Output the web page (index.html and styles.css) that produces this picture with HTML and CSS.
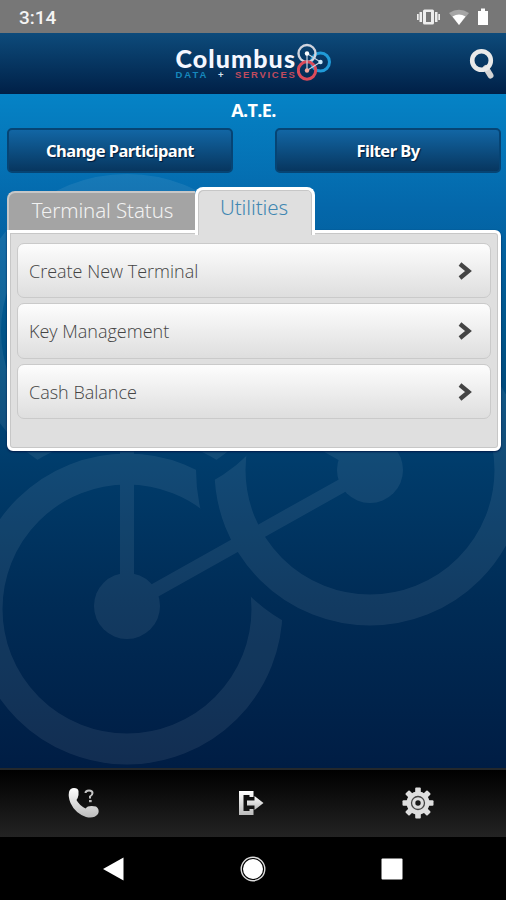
FILE: index.html
```html
<!DOCTYPE html>
<html lang="en">
<head>
<meta charset="utf-8">
<title>Columbus Data Services</title>
<link rel="stylesheet" href="styles.css">
</head>
<body>
<div class="status">
  <span class="clock">3:14</span>
  <svg class="status-icons" width="76" height="20" viewBox="0 0 76 20">
    <g fill="#eee"><rect x="6" y="2.500" width="11" height="15" rx="1.500"/><rect x="2.500" y="5" width="2.500" height="10"/><rect x="18" y="5" width="2.500" height="10"/><rect x="0" y="7" width="1.700" height="6"/><rect x="21.300" y="7" width="1.700" height="6"/></g>
    <rect x="9" y="5" width="5" height="10" fill="#777"/>
    <path d="M32 6Q42-.5 52 6L42 18Z" fill="#a5a5a5"/><path d="M35.500 9.500Q42 5.500 48.500 9.500L42 18Z" fill="#fff"/>
    <path d="M61 4h3V1.500h4V4h3v14H61Z" fill="#fff"/>
  </svg>
</div>
<header class="header">
  <div class="brand">
    <div class="wordmark"><div class="name">Columbus</div><div class="tag"><span class="data">DATA</span><span class="plus">+</span><span class="services">SERVICES</span></div></div>
    <svg class="logo" width="36" height="40" viewBox="0 0 36 40" fill="none">
      <circle cx="23.500" cy="20" r="9" stroke="#209bd8" stroke-width="3"/>
      <circle cx="10" cy="11.500" r="8.500" stroke="#d0d4de" stroke-width="2.400"/>
      <circle cx="10" cy="28.500" r="8.700" stroke="#db4b5a" stroke-width="3"/>
      <path d="M10 11.500V28.500L23.500 20Z" stroke="#c7d4e2" stroke-width="1.200"/>
      <circle cx="10" cy="11.500" r="2.200" fill="#fff"/><circle cx="10" cy="28.500" r="2.200" fill="#f6a69c"/><circle cx="23.500" cy="20" r="2.200" fill="#cdeafa"/>
    </svg>
  </div>
  <svg class="search" width="28" height="34" viewBox="0 0 28 34" fill="none"><path d="M17 20L21.500 27.500" stroke="#d4d4d4" stroke-width="6" stroke-linecap="round"/><circle cx="12.500" cy="12.500" r="9.300" stroke="#e9e9e9" stroke-width="4.600"/></svg>
</header>
<main class="main">
  <svg class="wheels" width="506" height="675" viewBox="0 94 506 675" fill="none">
    <defs>
      <mask id="cut1" maskUnits="userSpaceOnUse" x="-50" y="90" width="620" height="700"><rect x="-50" y="90" width="620" height="700" fill="#fff"/><circle cx="370" cy="470" r="174" fill="#000"/></mask>
      <mask id="cut2" maskUnits="userSpaceOnUse" x="-50" y="90" width="620" height="700"><rect x="-50" y="90" width="620" height="700" fill="#fff"/><circle cx="127" cy="331" r="173" fill="#000"/></mask>
      <mask id="cut3" maskUnits="userSpaceOnUse" x="-50" y="90" width="620" height="700"><rect x="-50" y="90" width="620" height="700" fill="#fff"/><circle cx="127" cy="609" r="174" fill="#000"/></mask>
    </defs>
    <g class="wheel-group" stroke="#fff" stroke-width="31">
      <circle cx="127" cy="609" r="140" mask="url(#cut1)"/>
      <circle cx="370" cy="470" r="140" mask="url(#cut2)"/>
      <circle cx="127" cy="331" r="141.500" mask="url(#cut3)"/>
      <path d="M127 331V606L370 470Z" stroke-width="14"/>
      <g fill="#fff" stroke="none"><circle cx="127" cy="606" r="33"/><circle cx="370" cy="470" r="33"/><circle cx="127" cy="331" r="33"/></g>
    </g>
  </svg>
  <h1 class="title">A.T.E.</h1>
  <div class="buttons"><button class="button">Change Participant</button><button class="button">Filter By</button></div>
  <nav class="tabs"><div class="tab">Terminal Status</div><div class="tab active"><span>Utilities</span></div></nav>
  <section class="panel">
    <div class="row"><span>Create New Terminal</span><svg class="chevron" width="16" height="20" viewBox="0 0 16 20"><path d="M3 3L11.500 10L3 17" fill="none" stroke="#444" stroke-width="4.300"/></svg></div>
    <div class="row"><span>Key Management</span><svg class="chevron" width="16" height="20" viewBox="0 0 16 20"><path d="M3 3L11.500 10L3 17" fill="none" stroke="#444" stroke-width="4.300"/></svg></div>
    <div class="row"><span>Cash Balance</span><svg class="chevron" width="16" height="20" viewBox="0 0 16 20"><path d="M3 3L11.500 10L3 17" fill="none" stroke="#444" stroke-width="4.300"/></svg></div>
  </section>
</main>
<nav class="toolbar">
  <div class="tool"><svg width="34" height="36" viewBox="0 0 34 36"><defs><linearGradient id="metal" x2="0" y2="1"><stop stop-color="#fff"/><stop offset="1" stop-color="#bbb"/></linearGradient></defs><path d="M2 7Q3 3 7 3Q11 3 11.500 6V10Q11 13 9.500 15Q12 20 18.500 23.500Q21 20 29 21.500Q33 24 31 29Q27 34 19 32Q8 28 3.500 18Q1 12 2 7Z" fill="url(#metal)"/><path d="M18.500 8Q18.500 5.500 22 5.500Q25.500 5.500 25.500 8Q25.500 10 23 11.500V13.500" fill="none" stroke="#c5c5c5" stroke-width="2"/><rect x="22" y="15" width="2.700" height="2.200" fill="#bbb"/></svg></div>
  <div class="tool"><svg width="28" height="28" viewBox="0 0 28 28"><path d="M16.500 2H2V26H16.500V20H12.500V22H6.500V6H12.500V8H16.500Z" fill="url(#metal)"/><path d="M10 11.500H17.500V7L26.500 14L17.500 21V16.500H10Z" fill="url(#metal)"/></svg></div>
  <div class="tool"><svg width="34" height="34" viewBox="-17 -17 34 34"><g fill="#dedede"><circle r="11.500"/><g id="teeth"><rect x="-2.800" y="-15.500" width="5.600" height="31" rx="1"/><rect x="-15.500" y="-2.800" width="31" height="5.600" rx="1"/></g><use href="#teeth" transform="rotate(45)"/></g><circle r="6.500" fill="none" stroke="#444" stroke-width="1.300"/><circle r="2.700" fill="#181818"/></svg></div>
</nav>
<nav class="system">
  <svg width="22" height="24" viewBox="0 0 22 24"><path d="M0 12L20.500 .5V23.500Z" fill="#fff"/></svg>
  <svg width="26" height="26" viewBox="0 0 26 26"><circle cx="13" cy="13" r="11.800" fill="none" stroke="#ddd" stroke-width="1.400"/><circle cx="13" cy="13" r="10" fill="#fff"/></svg>
  <svg width="22" height="22" viewBox="0 0 22 22"><rect x=".5" y=".5" width="21" height="21" rx="1" fill="#fff"/></svg>
</nav>
</body>
</html>
```
FILE: styles.css
```css
* { box-sizing: border-box; }
body { margin: 0; width: 506px; height: 900px; overflow: hidden; display: flex; flex-direction: column; background: #000; font-family: "Open Sans", sans-serif; }
.status { height: 33px; flex: none; background: #777; display: flex; align-items: center; justify-content: space-between; padding: 0 13px 0 19px; color: #f4f4f4; }
.clock { font: 500 19px/33px Roboto, sans-serif; padding-top: 2px; }
.header { height: 61px; flex: none; display: grid; grid-template-columns: 1fr auto 1fr; background: linear-gradient(#0d4b7b, #002047); align-items: start; }
.brand { grid-column: 2; display: flex; padding-top: 9px; }
.wordmark { width: 121px; padding-top: 5px; margin-left: 2px; }
.name { color: #f5f7ff; font: 900 25px/22px Lato, sans-serif; letter-spacing: 1.1px; white-space: nowrap; }
.tag { font: 700 9.5px/12px "Liberation Sans", sans-serif; display: flex; justify-content: space-between; letter-spacing: 2px; width: 121px; }
.data { color: #1688bd; }
.plus { color: #d8e5ef; }
.services { color: #c04b5e; letter-spacing: 1.7px; }
.search { justify-self: end; margin: 15px 9px 0 0; }
.main { height: 674px; flex: none; position: relative; padding-top: 1px; overflow: hidden; background: linear-gradient(#0583c6 0, #0467aa 17%, #005488 36%, #003c6b 55%, #002c56 75%, #001d44 100%); }
.wheels { position: absolute; inset: 0; }
.wheel-group { opacity: .07; }
.title { position: relative; margin: 0; text-align: center; color: #fff; font: 700 18px/31px "Open Sans", sans-serif; letter-spacing: -.6px; padding-left: 1px; }
.buttons { position: relative; display: flex; justify-content: space-between; padding: 2px 5px 0 7px; }
.button { width: 226px; height: 45px; border: 2px solid #064474; border-radius: 5px; background: linear-gradient(#1266a4, #07365f); color: #fff; font: 700 16.500px/40px "Noto Sans", sans-serif; padding: 0; letter-spacing: -.55px; text-shadow: 1px 1px 1px #001a3b; }
.tabs { position: relative; z-index: 2; display: flex; align-items: flex-end; margin: 14px 0 -5px 7px; height: 48px; }
.tab { width: 188px; height: 39px; margin-bottom: 5px; border: 3px solid #c7c7c7; border-width: 2px 0 0 2px; border-radius: 8px 0 0; background: #a4a4a4; color: #f2f2f2; font: 300 20.500px/35px "Noto Sans", sans-serif; letter-spacing: -.1px; text-align: center; padding-left: 1px; }
.tab.active { width: 120px; height: 48px; margin: 0; border: 3px solid #fff; border-bottom: 0; border-radius: 8px 8px 0 0; background: #dfdfdf; color: #3f87b2; line-height: 34px; padding: 0 2px 0 0; box-shadow: inset 1px 1px #c7c7c7, inset -1px 0 #c7c7c7; }
.panel { position: relative; margin: 0 5px 0 7px; height: 221px; border: 3px solid #fff; border-radius: 0 6px 6px; background: #dfdfdf; box-shadow: inset 0 0 0 1px #c7c7c7, 0 1px 2px #001a49; padding: 9.500px 7px; display: flex; flex-direction: column; gap: 5px; }
.row { height: 55.500px; flex: none; border: 1.500px solid #cacaca; border-radius: 7px; background: linear-gradient(#fdfdfd, #dedede); display: flex; justify-content: space-between; align-items: center; color: #444; font: 300 18px/30px "Open Sans", sans-serif; padding: 1px 17px 0 11px; }
.toolbar { height: 69px; flex: none; background: linear-gradient(#000, #232323); border-top: 2px solid #24282b; display: grid; grid-template-columns: 1fr 1fr 1fr; padding: 0 3px 2px 0; }
.tool { display: flex; align-items: center; justify-content: center; }
.tool:nth-child(3) { padding-right: 3px; }
.system { flex: 1; background: #000; display: flex; align-items: center; padding: 0 103px; justify-content: space-between; }
```
